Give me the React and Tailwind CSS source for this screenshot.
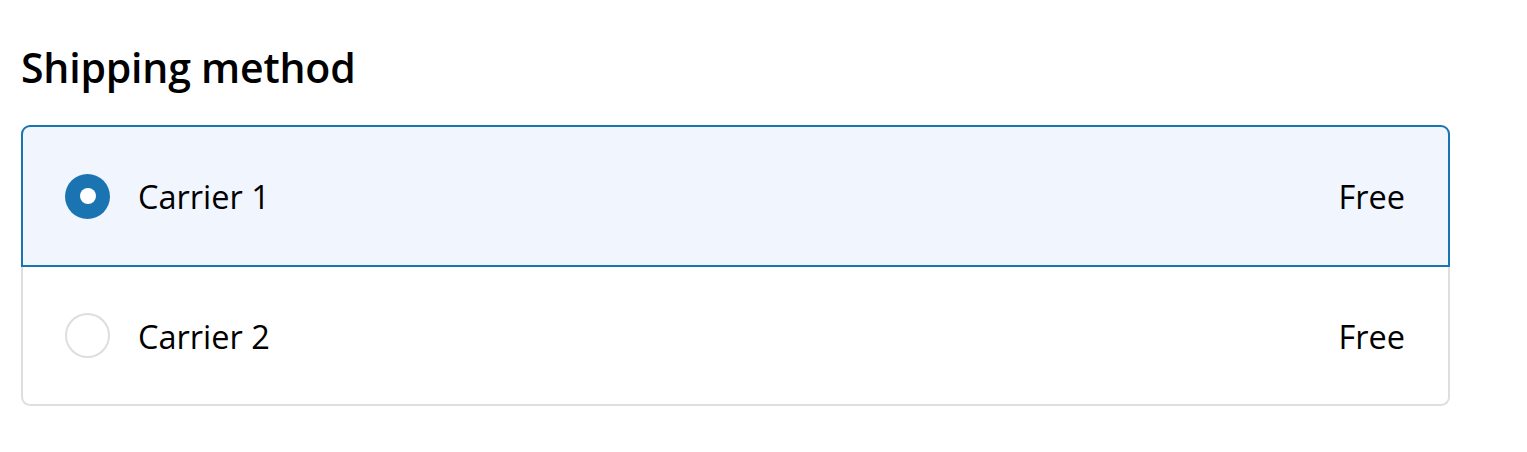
import { useState } from 'react'

const CARRIERS = [
  { id: 'carrier-1', name: 'Carrier 1', price: 'Free' },
  { id: 'carrier-2', name: 'Carrier 2', price: 'Free' },
]

function Radio({ checked }) {
  if (checked) {
    return (
      <span className="w-[45px] h-[45px] rounded-full bg-[#1b74b2] flex items-center justify-center shrink-0">
        <span className="w-[16px] h-[16px] rounded-full bg-white" />
      </span>
    )
  }
  return <span className="w-[45px] h-[45px] rounded-full border-2 border-[#dedede] bg-white shrink-0" />
}

export default function App() {
  const [selected, setSelected] = useState('carrier-1')

  return (
    <div className="min-h-screen bg-white text-black pl-[21px] pr-[77px] pt-[40px] font-['Open_Sans',sans-serif]">
      <h2 className="text-[41px] font-semibold leading-[54px] tracking-[-0.2px]">Shipping method</h2>

      <div className="mt-[31px]">
        {CARRIERS.map((c, i) => {
          const isSel = selected === c.id
          const first = i === 0
          const last = i === CARRIERS.length - 1
          return (
            <label
              key={c.id}
              onClick={() => setSelected(c.id)}
              className={`flex items-center pl-[42px] pr-[43px] cursor-pointer border-2 ${
                first ? 'rounded-t-[9px] h-[142px]' : 'border-t-0 h-[139px]'
              } ${last ? 'rounded-b-[9px]' : ''} ${
                isSel ? 'bg-[#f0f5fe] border-[#1b74b2]' : 'bg-white border-[#dedede]'
              }`}
            >
              <Radio checked={isSel} />
              <span className="ml-[28px] text-[32.5px] leading-none flex-1 pt-[3px]">{c.name}</span>
              <span className="text-[32.5px] leading-none pt-[3px]">{c.price}</span>
            </label>
          )
        })}
      </div>
    </div>
  )
}
